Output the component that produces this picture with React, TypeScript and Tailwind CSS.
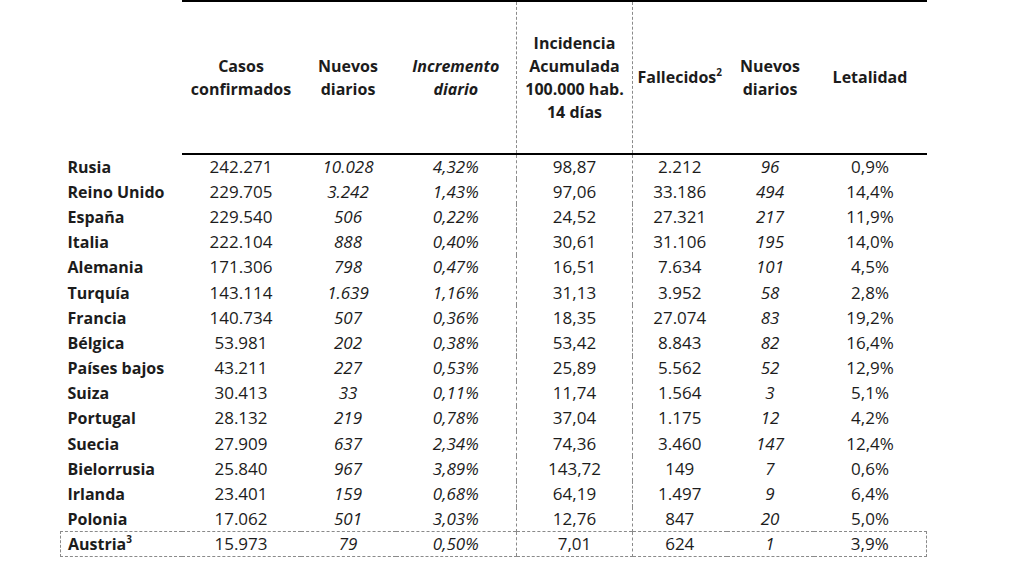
import React from 'react';

type Row = {
  pais: string;
  casos: string;
  nuevos: string;
  incremento: string;
  incidencia: string;
  fallecidos: string;
  nuevosF: string;
  letalidad: string;
};

const rows: Row[] = [
  { pais: 'Rusia', casos: '242.271', nuevos: '10.028', incremento: '4,32%', incidencia: '98,87', fallecidos: '2.212', nuevosF: '96', letalidad: '0,9%' },
  { pais: 'Reino Unido', casos: '229.705', nuevos: '3.242', incremento: '1,43%', incidencia: '97,06', fallecidos: '33.186', nuevosF: '494', letalidad: '14,4%' },
  { pais: 'España', casos: '229.540', nuevos: '506', incremento: '0,22%', incidencia: '24,52', fallecidos: '27.321', nuevosF: '217', letalidad: '11,9%' },
  { pais: 'Italia', casos: '222.104', nuevos: '888', incremento: '0,40%', incidencia: '30,61', fallecidos: '31.106', nuevosF: '195', letalidad: '14,0%' },
  { pais: 'Alemania', casos: '171.306', nuevos: '798', incremento: '0,47%', incidencia: '16,51', fallecidos: '7.634', nuevosF: '101', letalidad: '4,5%' },
  { pais: 'Turquía', casos: '143.114', nuevos: '1.639', incremento: '1,16%', incidencia: '31,13', fallecidos: '3.952', nuevosF: '58', letalidad: '2,8%' },
  { pais: 'Francia', casos: '140.734', nuevos: '507', incremento: '0,36%', incidencia: '18,35', fallecidos: '27.074', nuevosF: '83', letalidad: '19,2%' },
  { pais: 'Bélgica', casos: '53.981', nuevos: '202', incremento: '0,38%', incidencia: '53,42', fallecidos: '8.843', nuevosF: '82', letalidad: '16,4%' },
  { pais: 'Países bajos', casos: '43.211', nuevos: '227', incremento: '0,53%', incidencia: '25,89', fallecidos: '5.562', nuevosF: '52', letalidad: '12,9%' },
  { pais: 'Suiza', casos: '30.413', nuevos: '33', incremento: '0,11%', incidencia: '11,74', fallecidos: '1.564', nuevosF: '3', letalidad: '5,1%' },
  { pais: 'Portugal', casos: '28.132', nuevos: '219', incremento: '0,78%', incidencia: '37,04', fallecidos: '1.175', nuevosF: '12', letalidad: '4,2%' },
  { pais: 'Suecia', casos: '27.909', nuevos: '637', incremento: '2,34%', incidencia: '74,36', fallecidos: '3.460', nuevosF: '147', letalidad: '12,4%' },
  { pais: 'Bielorrusia', casos: '25.840', nuevos: '967', incremento: '3,89%', incidencia: '143,72', fallecidos: '149', nuevosF: '7', letalidad: '0,6%' },
  { pais: 'Irlanda', casos: '23.401', nuevos: '159', incremento: '0,68%', incidencia: '64,19', fallecidos: '1.497', nuevosF: '9', letalidad: '6,4%' },
  { pais: 'Polonia', casos: '17.062', nuevos: '501', incremento: '3,03%', incidencia: '12,76', fallecidos: '847', nuevosF: '20', letalidad: '5,0%' },
];

const austria: Row = { pais: 'Austria', casos: '15.973', nuevos: '79', incremento: '0,50%', incidencia: '7,01', fallecidos: '624', nuevosF: '1', letalidad: '3,9%' };

const th = 'border-t-2 border-b-2 border-t-black border-b-black font-bold text-center align-middle p-0 leading-[23px]';
const td = 'text-center align-middle p-0 text-[17px] leading-[20px]';
const name = 'p-0 pl-[7px] font-bold text-left align-middle leading-[20px]';
// vertical dashed rules round the Incidencia column only
const sides = 'border-l border-r border-l-[#8a8a8a] border-r-[#8a8a8a] [border-left-style:dashed] [border-right-style:dashed]';
const dash = 'border-dashed border-[#8a8a8a]';

export default function App() {
  return (
    <div className="w-[1024px] h-[576px] bg-white overflow-hidden font-['Open_Sans',sans-serif] text-[16px] text-[#1c1c1c]">
      <table className="ml-[60px] w-[866px] table-fixed border-collapse">
        <colgroup>
          <col className="w-[121px]" />
          <col className="w-[119px]" />
          <col className="w-[95px]" />
          <col className="w-[121px]" />
          <col className="w-[116px]" />
          <col className="w-[94px]" />
          <col className="w-[87px]" />
          <col className="w-[113px]" />
        </colgroup>
        <thead>
          <tr className="h-[153px]">
            <th className="p-0 border-b-2 border-b-transparent" />
            <th className={th}>Casos<br />confirmados</th>
            <th className={th}>Nuevos<br />diarios</th>
            <th className={`${th} italic`}>Incremento<br />diario</th>
            <th className={`${th} ${sides}`}>Incidencia<br />Acumulada<br />100.000 hab.<br />14 días</th>
            <th className={th}>Fallecidos<sup className="text-[10px] -top-[0.7em]">2</sup></th>
            <th className={th}>Nuevos<br />diarios</th>
            <th className={th}>Letalidad</th>
          </tr>
        </thead>
        <tbody>
          {rows.map((r) => (
            <tr key={r.pais} className="h-[25.2px]">
              <td className={name}>{r.pais}</td>
              <td className={td}>{r.casos}</td>
              <td className={`${td} italic`}>{r.nuevos}</td>
              <td className={`${td} italic`}>{r.incremento}</td>
              <td className={`${td} ${sides}`}>{r.incidencia}</td>
              <td className={td}>{r.fallecidos}</td>
              <td className={`${td} italic`}>{r.nuevosF}</td>
              <td className={td}>{r.letalidad}</td>
            </tr>
          ))}
          <tr className="h-[25px]">
            <td className={`${name} border-l border-t border-b ${dash}`}>
              {austria.pais}
              <sup className="text-[10px] -top-[0.7em]">3</sup>
            </td>
            <td className={`${td} border-t border-b ${dash}`}>{austria.casos}</td>
            <td className={`${td} italic border-t border-b ${dash}`}>{austria.nuevos}</td>
            <td className={`${td} italic border-t border-b ${dash}`}>{austria.incremento}</td>
            <td className={`${td} border ${dash}`}>{austria.incidencia}</td>
            <td className={`${td} border-t border-b ${dash}`}>{austria.fallecidos}</td>
            <td className={`${td} italic border-t border-b ${dash}`}>{austria.nuevosF}</td>
            <td className={`${td} border-t border-b border-r ${dash}`}>{austria.letalidad}</td>
          </tr>
        </tbody>
      </table>
    </div>
  );
}
